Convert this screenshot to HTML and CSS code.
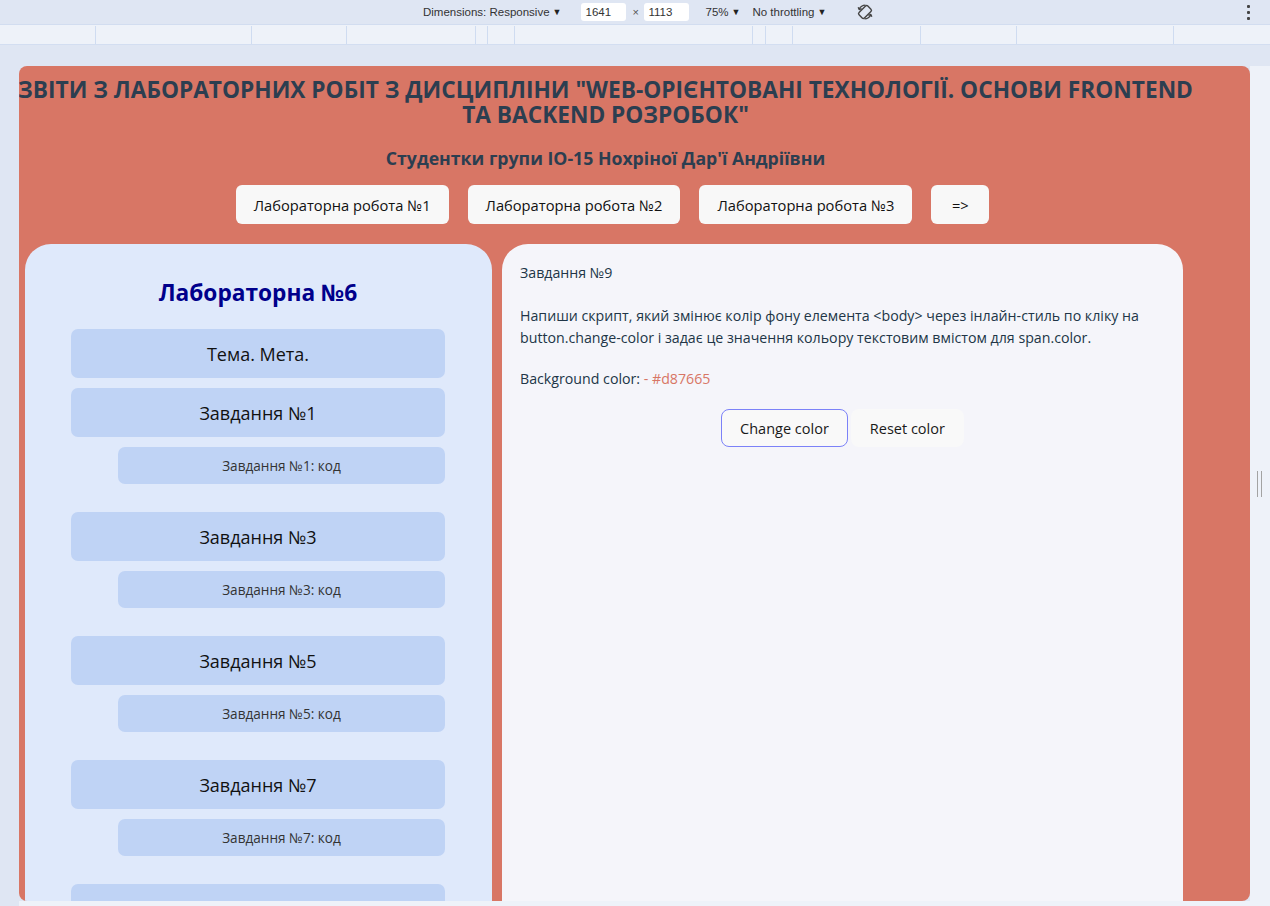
FILE: index.html
```html
<!DOCTYPE html>
<html lang="uk">
<head>
<meta charset="utf-8">
<title>Лабораторна №6</title>
<link rel="stylesheet" href="styles.css">
</head>
<body>
<div class="devtools">
  <div class="toolbar">
    <span class="tb-item tb-dim">Dimensions: Responsive<span class="caret">▼</span></span>
    <span class="tb-input tb-w">1641</span>
    <span class="tb-x">×</span>
    <span class="tb-input tb-h">1113</span>
    <span class="tb-item tb-zoom">75%<span class="caret">▼</span></span>
    <span class="tb-item tb-thr">No throttling<span class="caret">▼</span></span>
    <svg class="tb-rotate" width="18" height="18" viewBox="0 0 18 18" fill="none" stroke="#444" stroke-width="1.4">
      <rect x="5.2" y="2.8" width="7.6" height="12.4" rx="1.6" transform="rotate(45 9 9)"/>
      <path d="M3.2 6.2 A7 7 0 0 1 9.5 2.1"/>
      <path d="M14.8 11.8 A7 7 0 0 1 8.5 15.9"/>
      <path d="M2.2 4.2 L3.2 6.6 L5.6 5.6" stroke-linejoin="round"/>
      <path d="M15.8 13.8 L14.8 11.4 L12.4 12.4" stroke-linejoin="round"/>
    </svg>
    <span class="tb-kebab"><i></i><i></i><i></i></span>
  </div>
  <div class="ruler">
    <span style="width:96px"></span><span style="width:156px"></span><span style="width:95px"></span><span style="width:129px"></span><span style="width:12px"></span><span style="width:27px"></span><span style="width:238px"></span><span style="width:13px"></span><span style="width:27px"></span><span style="width:128px"></span><span style="width:96px"></span><span style="width:157px"></span><span class="ruler-rest"></span>
  </div>
  <div class="stage">
    <div class="gutter-left"></div>
    <div class="device-col">
      <div class="page">
        <header class="page-head">
          <h1 class="title">ЗВІТИ З ЛАБОРАТОРНИХ РОБІТ З ДИСЦИПЛІНИ "WEB-ОРІЄНТОВАНІ ТЕХНОЛОГІЇ. ОСНОВИ FRONTEND<br>ТА BACKEND РОЗРОБОК"</h1>
          <p class="subtitle">Студентки групи ІО-15 Нохріної Дар'ї Андріївни</p>
          <nav class="lab-nav">
            <button class="nav-btn">Лабораторна робота №1</button>
            <button class="nav-btn">Лабораторна робота №2</button>
            <button class="nav-btn">Лабораторна робота №3</button>
            <button class="nav-btn nav-next">=&gt;</button>
          </nav>
        </header>
        <div class="panels">
          <aside class="side">
            <h2 class="side-title">Лабораторна №6</h2>
            <div class="item item-main">Тема. Мета.</div>
            <div class="item item-main">Завдання №1</div>
            <div class="item item-code">Завдання №1: код</div>
            <div class="item item-main">Завдання №3</div>
            <div class="item item-code">Завдання №3: код</div>
            <div class="item item-main">Завдання №5</div>
            <div class="item item-code">Завдання №5: код</div>
            <div class="item item-main">Завдання №7</div>
            <div class="item item-code">Завдання №7: код</div>
            <div class="item item-main">Завдання №9</div>
          </aside>
          <main class="content">
            <p class="task-title">Завдання №9</p>
            <p class="task-text">Напиши скрипт, який змінює колір фону елемента &lt;body&gt; через інлайн-стиль по кліку на button.change-color і задає це значення кольору текстовим вмістом для span.color.</p>
            <p class="bg-line">Background color: <span class="color">- #d87665</span></p>
            <div class="actions">
              <button class="act-btn act-active">Change color</button>
              <button class="act-btn">Reset color</button>
            </div>
          </main>
        </div>
      </div>
      <div class="bottom-strip"></div>
    </div>
    <div class="gutter-right"><span class="handle"></span></div>
  </div>
</div>
</body>
</html>
```
FILE: styles.css
```css
* { box-sizing: border-box; }
html, body { margin: 0; padding: 0; }
body {
  width: 1270px;
  height: 906px;
  overflow: hidden;
  background: #dfe6f3;
  font-family: "Open Sans", "Noto Sans", sans-serif;
}

/* ---------- devtools chrome ---------- */
.toolbar {
  height: 25px;
  display: flex;
  align-items: center;
  background: #dfe6f3;
  font-family: "Liberation Sans", Arial, sans-serif;
  font-size: 11.5px;
  color: #333;
  border-bottom: 1px solid #d2ddf0;
}
.tb-item { white-space: nowrap; }
.caret { font-size: 9px; margin-left: 3px; position: relative; top: -1px; color: #222; }
.tb-dim { margin-left: 423px; }
.tb-input {
  background: #fff;
  border-radius: 3px;
  height: 18px;
  line-height: 18px;
  padding-left: 4px;
  width: 45px;
}
.tb-w { margin-left: 20px; }
.tb-x { margin-left: 6px; width: 12px; font-size: 11px; color: #555; }
.tb-zoom { margin-left: 16px; }
.tb-thr { margin-left: 12px; }
.tb-rotate { margin-left: 30px; }
.tb-kebab {
  margin-left: auto;
  margin-right: 20px;
  display: flex;
  flex-direction: column;
  gap: 3px;
}
.tb-kebab i { display: block; width: 3px; height: 3px; background: #444; border-radius: 1px; }

.ruler {
  height: 20px;
  display: flex;
  background: #eef2f9;
  border-bottom: 1px solid #d3def1;
}
.ruler span { display: block; height: 18px; margin-top: 1px; border-right: 1px solid #cfdcf1; }
.ruler .ruler-rest { flex: 1; border-right: none; }

.stage {
  display: flex;
  padding-top: 21px;
}
.gutter-left { width: 19px; }
.device-col { width: 1231px; }
.gutter-right {
  width: 20px;
  height: 840px;
  background: #eef2f9;
  position: relative;
}
.handle {
  position: absolute;
  left: 7px;
  top: 405px;
  width: 5px;
  height: 26px;
  border-left: 1px solid #a3a3a3;
  border-right: 1px solid #a3a3a3;
}
.bottom-strip { height: 6px; background: #eef2f9; }

/* ---------- emulated page ---------- */
.page {
  width: 1231px;
  height: 835px;
  background: #d87665;
  border-radius: 8px;
  overflow: hidden;
  font-family: "Open Sans", "Noto Sans", sans-serif;
}
.page-head {
  width: 1173px;
  text-align: center;
  padding-top: 11px;
}
.title {
  margin: 0 -14px;
  font-size: 22.7px;
  line-height: 25px;
  font-weight: 700;
  color: #2c3e50;
  white-space: nowrap;
}
.subtitle {
  margin: 20px 0 0;
  font-size: 17.7px;
  line-height: 22px;
  font-weight: 700;
  color: #2c3e50;
}
.lab-nav {
  margin-top: 16px;
  display: flex;
  justify-content: center;
  gap: 19px;
  padding-left: 14px;
}
.nav-btn {
  height: 39px;
  padding: 0 18px;
  background: #f8f8f8;
  border: none;
  border-radius: 6px;
  font-family: "Open Sans", "Noto Sans", sans-serif;
  font-size: 14.7px;
  color: #111;
}
.nav-next { width: 58px; padding: 0; }

.panels {
  display: flex;
  gap: 10px;
  margin-top: 20px;
  padding-left: 6px;
}
.side {
  width: 467px;
  height: 700px;
  background: #dfe9fb;
  border-radius: 26px 26px 0 0;
  padding: 34px 47px 0 46px;
}
.side-title {
  margin: 0 0 21px;
  text-align: center;
  font-size: 22.7px;
  line-height: 30px;
  font-weight: 700;
  color: #00008b;
}
.item {
  background: #bfd3f5;
  border-radius: 7px;
  display: flex;
  align-items: center;
  justify-content: center;
}
.item-main {
  height: 49px;
  margin-bottom: 10px;
  font-size: 18px;
  font-weight: 500;
  color: #111;
}
.item-code {
  height: 37px;
  margin-left: 47px;
  margin-bottom: 28px;
  font-size: 13.6px;
  color: #333;
}

.content {
  width: 681px;
  height: 700px;
  background: #f5f5fa;
  border-radius: 26px 26px 0 0;
  padding: 18px 18px 0;
  color: #213547;
  font-size: 14.2px;
  line-height: 22px;
}
.content p { margin: 0; }
.task-text { margin-top: 21px !important; }
.bg-line { margin-top: 19px !important; }
.color { color: #d87665; }
.actions {
  margin-top: 19px;
  display: flex;
  justify-content: center;
  gap: 3px;
}
.act-btn {
  height: 38px;
  padding: 0 18px;
  border: 1px solid transparent;
  border-radius: 8px;
  background: #f9f9f9;
  font-family: "Open Sans", "Noto Sans", sans-serif;
  font-size: 14.5px;
  font-weight: 500;
  color: #1a1a1a;
}
.act-active { border-color: #7c82f8; }
```
